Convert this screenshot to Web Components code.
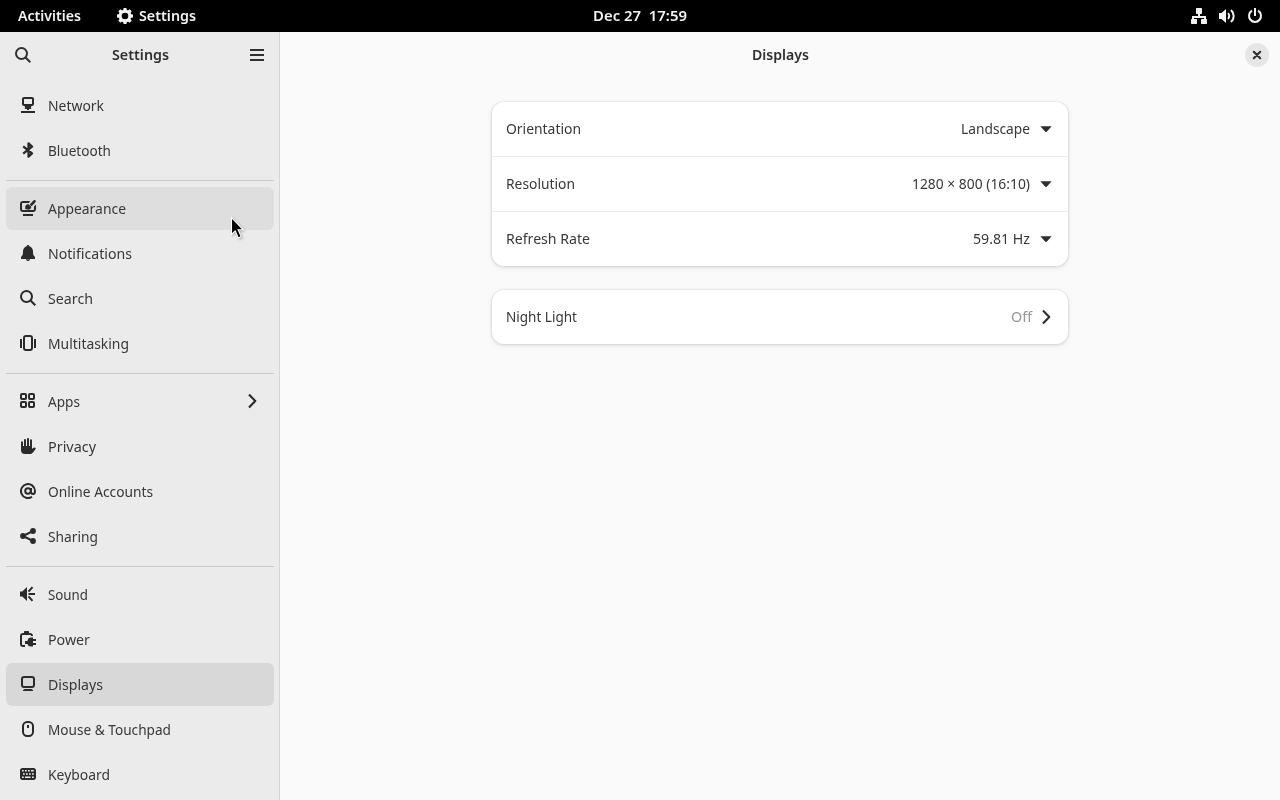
<!DOCTYPE html>
<html lang="en"><head><meta charset="utf-8"><title>Settings</title>
<style>
html,body{margin:0;height:100%;overflow:hidden}
body{font:14.67px/20px "Noto Sans","Open Sans",sans-serif;color:#383838;background:#fafafa}
</style></head><body>
<settings-desktop></settings-desktop>
<script>
const TEETH = [0,45,90,135].map(a=>`<path d="M6.600 0h2.800l.6 3v10l-.6 3H6.600L6 13V3z" transform="rotate(${a} 8 8)"/>`).join('');
const ICONS = {
 gear:`<mask id="m"><path d="M0 0h16v16H0z" fill="#fff"/><circle cx="8" cy="8" r="3.300" fill="#000"/></mask><g mask="url(#m)"><circle cx="8" cy="8" r="6.300"/>${TEETH}</g>`,
 search:'<g fill="none" stroke="currentColor" stroke-width="2"><circle cx="6.500" cy="6.500" r="5.500"/><path d="M10.300 10.300 15.300 15.300"/></g>',
 menu:'<path d="M1 2h14v2H1zM1 7h14v2H1zM1 12h14v2H1z"/>',
 network:'<rect x="3" y="1" width="10" height="7" rx="1" fill="none" stroke="currentColor" stroke-width="2"/><path d="M4 8h8L10 12H6zM7 10h2v3H7z"/><path d="M4.500 11.200 6.500 9h3l2 2.200-1 .8h-5zM1 14h14v2H1z"/>',
 bluetooth:'<path d="M3.200 4.400 12 11.300 8.500 14.600V1.400L12 4.700 3.200 11.600" fill="none" stroke="currentColor" stroke-width="2.300" stroke-linejoin="round"/>',
 appearance:'<path d="M10 1H3C1.200 1 0 2.200 0 4v5c0 1.800 1.200 3 3 3h10c1.800 0 3-1.200 3-3V4.500l-2 2V9c0 .7-.3 1-1 1H3c-.7 0-1-.3-1-1V4c0-.7.3-1 1-1h6zM3 14h10v2H3z"/><path d="M14.300 0c.8-.3 1.900.7 1.500 1.500-.8 1.500-3 3.800-4.400 4.800L9.700 4.600C10.900 3.200 13 .700 14.300 0z"/><path d="M8.500 4.200 11.200 6.800c.2 2-1.400 3-3.200 2.800-1.200 0-2.500-.2-3-1C5.500 7.800 5 7 5.500 5.700c.5-1 1.800-1.700 3-1.500z"/>',
 bell:'<path d="M8 0c.8 0 1.300.6 1.300 1.300C11.800 2 13 4 13 6.500c0 3 .4 4 2 5.500v2H1v-2c1.600-1.500 2-2.500 2-5.500C3 4 4.200 2 6.700 1.300 6.700.600 7.200 0 8 0zM6 14.300h4c0 1-.8 1.700-2 1.700s-2-.7-2-1.700z"/>',
 multi:'<rect x="4" y="1" width="8" height="14" rx="2" fill="none" stroke="currentColor" stroke-width="2"/><path d="M0 4h2v9H0zM14 4h2v9h-2z"/>',
 apps:'<g fill="none" stroke="currentColor" stroke-width="2"><rect x="1" y="1" width="5" height="5" rx="1"/><rect x="9" y="1" width="5" height="5" rx="1"/><rect x="1" y="9" width="5" height="5" rx="1"/><rect x="9" y="9" width="5" height="5" rx="1"/></g>',
 hand:'<path d="M1 4.200a1 1 0 0 1 2 0V8h1V2a1 1 0 0 1 2 0v6h1V1a1 1 0 0 1 2 0v7h1V2.300a1 1 0 0 1 2 0v8.400c1-.4 1.600-1.500 2.700-1.200.9.200 1.300.9 1 1.500-1 .9-1.600 2.400-3 3.800-.8.800-1.600 1.200-3 1.200H5c-2.600 0-4-1.300-4-4z"/>',
 at:'<g fill="none" stroke="currentColor" stroke-width="2"><path d="M12 13.800a7 7 0 1 1 3-5.800c0 2-.5 3-1.800 3S11 10.200 11 8.500V5"/><circle cx="8" cy="8" r="2.800"/></g>',
 share:'<path d="M13 3 3 8l10 5" fill="none" stroke="currentColor" stroke-width="2"/><circle cx="13" cy="3" r="2.900"/><circle cx="3" cy="8" r="2.900"/><circle cx="13" cy="13" r="2.900"/>',
 sound:'<path d="M0 5.500h2.300L7 1v14l-4.700-4.500H0z"/><path d="m8.500 5.600 4-4.400M8.500 8H15M8.500 10.400l4 4.400" fill="none" stroke="currentColor" stroke-width="2"/>',
 power:'<path d="M4 2V1c0-.6.4-1 1-1h3c.6 0 1 .4 1 1v1h1c1.700 0 3 1.200 3 3h-2c0-.7-.3-1-1-1H3c-.6 0-1 .4-1 1v8c0 .6.4 1 1 1h2v2H3c-1.800 0-3-1.200-3-3V5c0-1.800 1.200-3 3-3z"/><path d="M11 6.500h2V8h3v2h-3v2h3v2h-3v1.500h-2c-2 0-3-.8-3.600-2.500H5V10h2.400C8 7.500 9 6.500 11 6.500z"/>',
 display:'<rect x="2" y="1" width="12" height="10" rx="2" fill="none" stroke="currentColor" stroke-width="2"/><path d="M5 13h6c1.200 0 2 .8 2 2H3c0-1.200.8-2 2-2z"/>',
 mouse:'<rect x="3" y="1" width="10" height="14" rx="4.200" fill="none" stroke="currentColor" stroke-width="2"/><path d="M7 4h2v3H7z"/>',
 keyboard:'<path fill-rule="evenodd" d="M2.500 2h11C15 2 16 3 16 4.500v7c0 1.500-1 2.500-2.500 2.500h-11C1 14 0 13 0 11.500v-7C0 3 1 2 2.500 2zM2 4v1.600h1.700V4zm3 0v1.600h1.700V4zm3 0v1.600h1.700V4zm3 0v1.600h2.700V4zM3 7.200v1.600h1.700V7.200zm3 0v1.600h1.700V7.200zm3 0v1.600h1.700V7.200zm3 0v1.600h1.700V7.200zM2 10.400V12h1.700v-1.600zm3 0V12h5.500v-1.600zm7 0V12h1.700v-1.600z"/>',
 chevron:'<path d="m5 1.500 6.300 6.500L5 14.500" fill="none" stroke="currentColor" stroke-width="2.100" stroke-linejoin="round"/>',
 caret:'<path d="M2.300 5.200h11.400L8.700 10.700q-.7.600-1.400 0z"/>',
 close:'<path d="m4.800 4.800 6.400 6.400M11.200 4.800 4.800 11.200" fill="none" stroke="currentColor" stroke-width="2.200" stroke-linecap="round"/>',
 wired:'<path d="M6 0h4c.6 0 1 .4 1 1v4c0 .6-.4 1-1 1H9v2h6v3h.200c.5 0 .8.3.8.8V15c0 .6-.4 1-1 1h-4c-.6 0-1-.4-1-1v-3c0-.6.4-1 1-1h2v-1H3v1h2c.6 0 1 .4 1 1v3c0 .6-.4 1-1 1H1c-.6 0-1-.4-1-1v-3.200c0-.5.3-.8.8-.8H1V8h6V6H6c-.6 0-1-.4-1-1V1c0-.6.4-1 1-1z"/>',
 volume:'<path d="M0 5h2.500L7 1v14l-4.500-4H0z"/><path d="M9 5.200c1.400 1.600 1.400 4 0 5.600" fill="none" stroke="currentColor" stroke-width="1.900"/><path d="M12 2c3.600 3.500 3.600 8.500 0 12" fill="none" stroke="currentColor" stroke-width="2"/>',
 shutdown:'<path d="M5 2.700a6 6 0 1 0 6 0M8 0v8" fill="none" stroke="currentColor" stroke-width="2"/>',
};
class Base extends HTMLElement{
  paint(html){ if(!this.shadowRoot) this.attachShadow({mode:'open'}); this.shadowRoot.innerHTML=html; }
}
customElements.define('symbolic-icon', class extends Base{
  connectedCallback(){
    this.paint(`<style>:host{display:block;width:16px;height:16px;flex:none}svg{display:block}</style>
<svg width="16" height="16" viewBox="0 0 16 16" fill="currentColor">${ICONS[this.getAttribute('name')]}</svg>`);
  }
});
/* Label whose text is condensed or widened to fill the given width. */
customElements.define('fit-label', class extends Base{
  connectedCallback(){
    this.paint(`<style>:host{display:block;white-space:pre;flex:none;padding-bottom:2px}span{display:inline-block;transform-origin:0 50%}</style><span></span>`);
    const s=this.shadowRoot.querySelector('span'), t=this.getAttribute('text'), w=+this.getAttribute('w');
    s.textContent=t;
    this.style.width=w+'px';
    s.style.transform=`scaleX(${w/s.getBoundingClientRect().width})`;
  }
});
customElements.define('top-bar', class extends Base{
  connectedCallback(){
    this.paint(`<style>:host{display:grid;grid-template-columns:1fr auto 1fr;align-items:center;height:32px;background:#000;color:#f2f2f2;font-weight:600}
div{display:flex;align-items:center}.l{padding-left:18px}.l symbolic-icon{margin:0 6px 0 36px}.r{justify-content:flex-end;gap:12px;padding-right:17px}</style>
<div class="l"><fit-label text="Activities" w="63"></fit-label><symbolic-icon name="gear"></symbolic-icon><fit-label text="Settings" w="57"></fit-label></div>
<fit-label text="Dec 27  17:59" w="94"></fit-label>
<div class="r"><symbolic-icon name="wired"></symbolic-icon><symbolic-icon name="volume"></symbolic-icon><symbolic-icon name="shutdown"></symbolic-icon></div>`);
  }
});
customElements.define('nav-item', class extends Base{
  connectedCallback(){
    const a=n=>this.getAttribute(n);
    this.paint(`<style>:host{display:flex;box-sizing:border-box;height:43px;padding:0 14px;border-radius:6px;align-items:center}
:host([hovered]){background:#dedede}:host([selected]){background:#d8d8d8}
symbolic-icon{margin-bottom:1px;color:#2a2a2a}fit-label{margin:0 auto 0 12px}</style>
<symbolic-icon name="${a('icon')}"></symbolic-icon><fit-label text="${a('label').replace('&','&amp;')}" w="${a('w')}"></fit-label>${this.hasAttribute('more')?'<symbolic-icon name="chevron"></symbolic-icon>':''}`);
  }
});
customElements.define('side-bar', class extends Base{
  connectedCallback(){
    const groups=[
      [['network','Network',56],['bluetooth','Bluetooth',63]],
      [['appearance','Appearance',78,'hovered'],['bell','Notifications',84],['search','Search',45],['multi','Multitasking',81]],
      [['apps','Apps',32,'more'],['hand','Privacy',48],['at','Online Accounts',105],['share','Sharing',50]],
      [['sound','Sound',40],['power','Power',42],['display','Displays',55,'selected'],['mouse','Mouse & Touchpad',123],['keyboard','Keyboard',62]]];
    this.paint(`<style>:host{display:flex;flex-direction:column;box-sizing:border-box;width:280px;background:#ebebeb;border-right:1px solid #d5d5d5;overflow:hidden}
header{display:flex;align-items:center;justify-content:space-between;height:46px;padding:0 14px 0 15px;margin-bottom:6px;font-weight:600;color:#303030;flex:none}
header fit-label{margin-left:1px}
nav{display:flex;flex-direction:column;gap:2px;padding:0 5px 0 6px}hr{border:0;height:1px;flex:none;align-self:stretch;background:#c9c9c9;margin:6px 0 4px}</style>
<header><symbolic-icon name="search"></symbolic-icon><fit-label text="Settings" w="57"></fit-label><symbolic-icon name="menu"></symbolic-icon></header>
<nav>${groups.map(g=>g.map(([i,l,w,f=''])=>`<nav-item icon="${i}" label="${l.replace('&','&amp;')}" w="${w}" ${f}></nav-item>`).join('')).join('<hr>')}</nav>`);
  }
});
customElements.define('setting-row', class extends Base{
  connectedCallback(){
    const a=n=>this.getAttribute(n), link=this.hasAttribute('link');
    this.paint(`<style>:host{display:flex;align-items:center;height:54px;padding:0 14px}
.v{margin:0 ${link?6:8}px 0 auto;color:${link?'#969696':'inherit'}}symbolic-icon{color:#2e2e2e}</style>
<fit-label text="${a('label')}" w="${a('lw')}"></fit-label><fit-label class="v" text="${a('value')}" w="${a('vw')}"></fit-label><symbolic-icon name="${link?'chevron':'caret'}"></symbolic-icon>`);
  }
});
customElements.define('settings-card', class extends Base{
  connectedCallback(){
    this.paint(`<style>:host{display:block;width:576px;border-radius:12px;background:#fff;box-shadow:0 0 0 1px rgba(0,0,0,.035),0 1px 3px 1px rgba(0,0,0,.08),0 2px 6px 2px rgba(0,0,0,.025)}
::slotted(:not(:first-child)){border-top:1px solid #e9e9e9}</style><slot></slot>`);
  }
});
customElements.define('displays-page', class extends Base{
  connectedCallback(){
    this.paint(`<style>:host{display:flex;flex-direction:column;background:#fafafa}
header{display:grid;grid-template-columns:1fr auto 1fr;align-items:center;height:46px;font-weight:600;color:#303030}header fit-label{grid-column:2}
button{justify-self:end;display:grid;place-items:center;width:24px;height:24px;padding:0;margin-right:11px;border:0;border-radius:50%;background:#e6e6e6;color:#303030}
main{display:flex;flex-direction:column;align-items:center;gap:24px;padding-top:24px}</style>
<header><fit-label text="Displays" w="57"></fit-label><button aria-label="Close"><symbolic-icon name="close"></symbolic-icon></button></header>
<main><settings-card>
<setting-row label="Orientation" lw="75" value="Landscape" vw="69"></setting-row>
<setting-row label="Resolution" lw="69" value="1280 × 800 (16:10)" vw="118"></setting-row>
<setting-row label="Refresh Rate" lw="84" value="59.81 Hz" vw="57"></setting-row></settings-card>
<settings-card><setting-row link label="Night Light" lw="71" value="Off" vw="21"></setting-row></settings-card></main>`);
  }
});
customElements.define('mouse-cursor', class extends Base{
  connectedCallback(){
    this.paint(`<style>:host{display:block;position:absolute;left:230px;top:216px;filter:drop-shadow(1px 1px 1px rgba(0,0,0,.3))}svg{display:block}</style>
<svg width="16" height="24" viewBox="0 0 16 24"><path d="M1.500 1.500v17l3.700-3.600 3.100 7 2.900-1.300-3.100-6.800h5.200z" fill="#000" stroke="#fff" stroke-width="1.100"/></svg>`);
  }
});
customElements.define('settings-desktop', class extends Base{
  connectedCallback(){
    this.paint(`<style>:host{display:grid;grid-template:32px minmax(0,1fr)/280px 1fr;height:100vh;position:relative;overflow:hidden}top-bar{grid-column:1/-1}</style>
<top-bar></top-bar><side-bar></side-bar><displays-page></displays-page><mouse-cursor></mouse-cursor>`);
  }
});
</script></body></html>
